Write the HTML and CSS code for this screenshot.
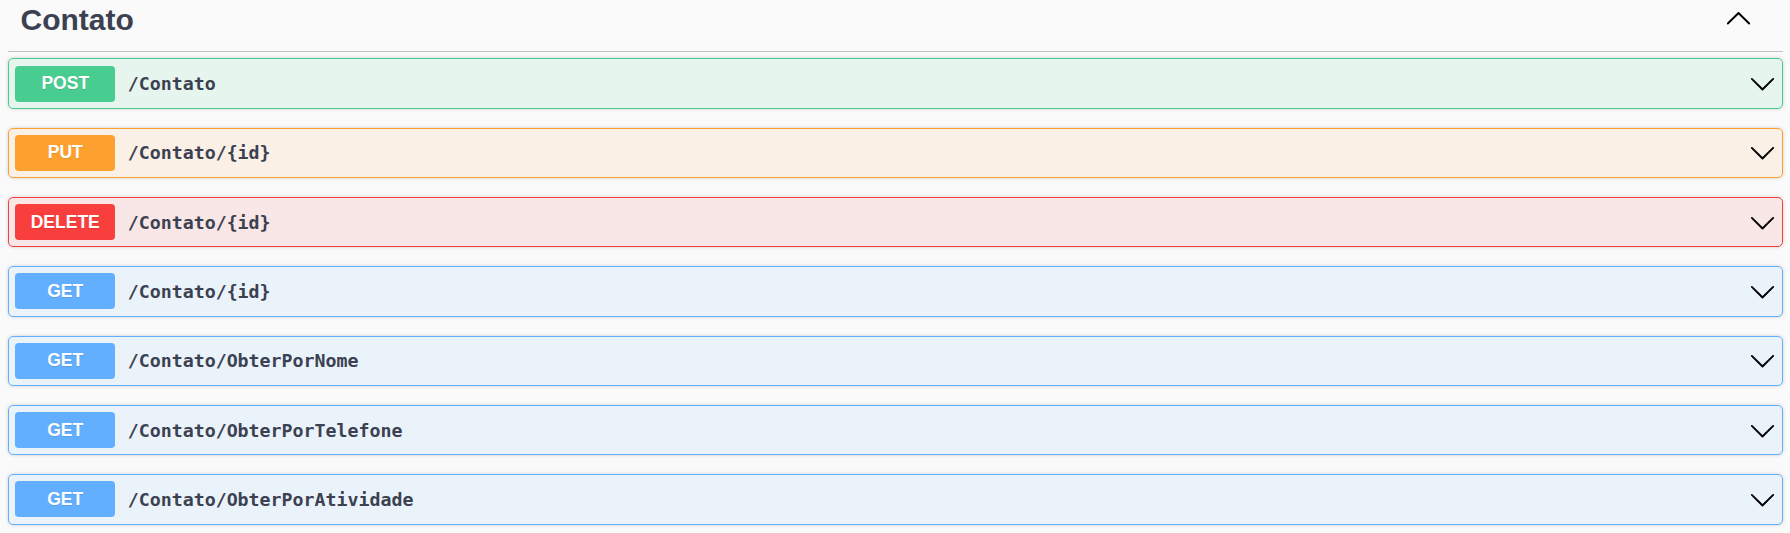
FILE: index.html
```html
<!DOCTYPE html>
<html lang="pt">
<head>
<meta charset="utf-8">
<title>Contato</title>
<link rel="stylesheet" href="styles.css">
</head>
<body>
<div class="section">
  <div class="tag-header">
    <h3 class="tag-title">Contato</h3>
    <svg class="arrow-up" width="27" height="27" viewBox="0 0 20 20"><path d="M17.418 14.908c.272.268.709.268.979 0 .27-.268.271-.701 0-.969l-7.908-7.83c-.27-.268-.707-.268-.979 0l-7.908 7.83c-.27.268-.27.701 0 .969.271.268.709.268.979 0L10 7.767l7.418 7.141z"/></svg>
  </div>

  <div class="opblock post">
    <span class="method">POST</span>
    <span class="path">/Contato</span>
    <svg class="arrow" width="27" height="27" viewBox="0 0 20 20"><path d="M17.418 6.109c.272-.268.709-.268.979 0s.271.701 0 .969l-7.908 7.83c-.27.268-.707.268-.979 0l-7.908-7.83c-.27-.268-.27-.701 0-.969.271-.268.709-.268.979 0L10 13.25l7.418-7.141z"/></svg>
  </div>

  <div class="opblock put">
    <span class="method">PUT</span>
    <span class="path">/Contato/{id}</span>
    <svg class="arrow" width="27" height="27" viewBox="0 0 20 20"><path d="M17.418 6.109c.272-.268.709-.268.979 0s.271.701 0 .969l-7.908 7.83c-.27.268-.707.268-.979 0l-7.908-7.83c-.27-.268-.27-.701 0-.969.271-.268.709-.268.979 0L10 13.25l7.418-7.141z"/></svg>
  </div>

  <div class="opblock delete">
    <span class="method">DELETE</span>
    <span class="path">/Contato/{id}</span>
    <svg class="arrow" width="27" height="27" viewBox="0 0 20 20"><path d="M17.418 6.109c.272-.268.709-.268.979 0s.271.701 0 .969l-7.908 7.83c-.27.268-.707.268-.979 0l-7.908-7.83c-.27-.268-.27-.701 0-.969.271-.268.709-.268.979 0L10 13.25l7.418-7.141z"/></svg>
  </div>

  <div class="opblock get">
    <span class="method">GET</span>
    <span class="path">/Contato/{id}</span>
    <svg class="arrow" width="27" height="27" viewBox="0 0 20 20"><path d="M17.418 6.109c.272-.268.709-.268.979 0s.271.701 0 .969l-7.908 7.83c-.27.268-.707.268-.979 0l-7.908-7.83c-.27-.268-.27-.701 0-.969.271-.268.709-.268.979 0L10 13.25l7.418-7.141z"/></svg>
  </div>

  <div class="opblock get">
    <span class="method">GET</span>
    <span class="path">/Contato/ObterPorNome</span>
    <svg class="arrow" width="27" height="27" viewBox="0 0 20 20"><path d="M17.418 6.109c.272-.268.709-.268.979 0s.271.701 0 .969l-7.908 7.83c-.27.268-.707.268-.979 0l-7.908-7.83c-.27-.268-.27-.701 0-.969.271-.268.709-.268.979 0L10 13.25l7.418-7.141z"/></svg>
  </div>

  <div class="opblock get">
    <span class="method">GET</span>
    <span class="path">/Contato/ObterPorTelefone</span>
    <svg class="arrow" width="27" height="27" viewBox="0 0 20 20"><path d="M17.418 6.109c.272-.268.709-.268.979 0s.271.701 0 .969l-7.908 7.83c-.27.268-.707.268-.979 0l-7.908-7.83c-.27-.268-.27-.701 0-.969.271-.268.709-.268.979 0L10 13.25l7.418-7.141z"/></svg>
  </div>

  <div class="opblock get">
    <span class="method">GET</span>
    <span class="path">/Contato/ObterPorAtividade</span>
    <svg class="arrow" width="27" height="27" viewBox="0 0 20 20"><path d="M17.418 6.109c.272-.268.709-.268.979 0s.271.701 0 .969l-7.908 7.83c-.27.268-.707.268-.979 0l-7.908-7.83c-.27-.268-.27-.701 0-.969.271-.268.709-.268.979 0L10 13.25l7.418-7.141z"/></svg>
  </div>
</div>
</body>
</html>
```

FILE: styles.css
```css
html, body {
  margin: 0;
  padding: 0;
  background: #fafafa;
  font-family: "Liberation Sans", Arial, sans-serif;
  color: #3b4151;
}

.section {
  padding: 0 7px 0 8px;
}

.tag-header {
  display: flex;
  align-items: flex-start;
  height: 51px;
  border-bottom: 1px solid rgba(59, 65, 81, 0.3);
  margin-bottom: 6.25px;
}

.tag-title {
  margin: 0 0 0 12.5px;
  padding-top: 1.5px;
  font-size: 30px;
  line-height: 36px;
  font-weight: bold;
  color: #3b4151;
}

.arrow-up {
  margin-left: auto;
  margin-right: 31px;
  margin-top: 4.2px;
  fill: #000;
}

.opblock {
  display: flex;
  align-items: center;
  padding: 6.25px;
  border: 1px solid;
  border-radius: 5px;
  box-shadow: 0 0 3.75px rgba(0, 0, 0, 0.19);
  margin-bottom: 18.83px;
}

.method {
  width: 100px;
  height: 36px;
  display: flex;
  align-items: center;
  justify-content: center;
  border-radius: 3.75px;
  color: #fff;
  font-family: "Liberation Sans", Arial, sans-serif;
  font-weight: bold;
  font-size: 17.5px;
  text-shadow: 0 1px 0 rgba(0, 0, 0, 0.1);
}

.path {
  padding: 0 12.5px;
  font-family: "DejaVu Sans Mono", monospace;
  font-weight: bold;
  font-size: 18.25px;
  color: #3b4151;
}

.arrow {
  margin-left: auto;
  fill: #000;
}

.post { background: rgba(73, 204, 144, 0.1); border-color: #49cc90; }
.post .method { background: #49cc90; }

.put { background: rgba(252, 161, 48, 0.1); border-color: #fca130; }
.put .method { background: #fca130; }

.delete { background: rgba(249, 62, 62, 0.1); border-color: #f93e3e; }
.delete .method { background: #f93e3e; }

.get { background: rgba(97, 175, 254, 0.1); border-color: #61affe; }
.get .method { background: #61affe; }
```
